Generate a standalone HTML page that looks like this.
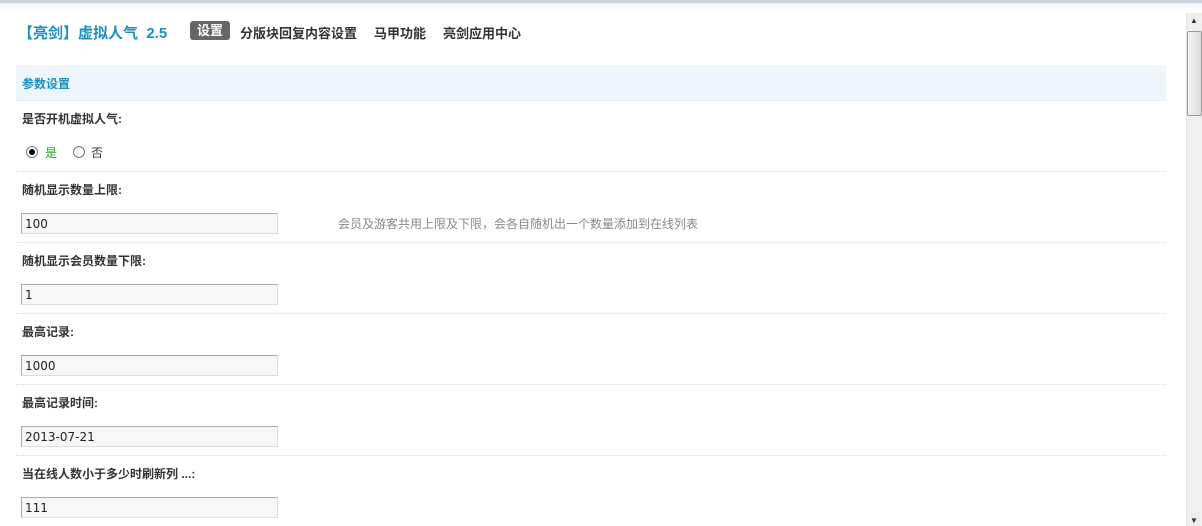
<!DOCTYPE html>
<html><head><meta charset="utf-8"><style>
*{margin:0;padding:0;box-sizing:border-box}
body{width:1202px;height:526px;overflow:hidden;background:#fff;font-family:"Liberation Sans","Noto Sans CJK SC",sans-serif;font-size:12px;color:#333;position:relative}
.top{position:absolute;left:0;top:0;width:1202px;height:13px;background:linear-gradient(#f3f8fc,#fff);border-top:3px solid #c6d6e2}
.a{position:absolute;white-space:nowrap}
.title{left:18px;top:22px;font-size:15px;font-weight:bold;color:#1a8fc0}
.tab{top:23px;font-size:13px;font-weight:bold;color:#333}
.on{left:190px;top:21px;width:40px;height:19px;background:#666;color:#fff;border-radius:3px;text-align:center;line-height:20px}
.band{left:16px;top:65px;width:1150px;height:36px;background:#eef6fc;border-bottom:1px dotted #dde8ee}
.band span{position:absolute;left:6px;top:10px;font-weight:bold;color:#1a8fc0;font-size:12px}
.lab{left:22px;font-weight:bold;font-size:12px;color:#333}
.sep{left:16px;width:1150px;height:0;border-top:1px dotted #dcdcdc}
.inp{left:21px;width:257px;height:21px;border:1px solid #aaa;border-right-color:#ddd;border-bottom-color:#ddd;background:#f7f7f7;font-size:12px;padding:3px 0 0 3px;font-family:"DejaVu Sans",sans-serif;color:#222}
.tip{left:338px;top:215px;color:#888;font-size:12px}
.sb{position:absolute;left:1186px;top:13px;width:16px;height:513px;background:#efefef;border-left:1px solid #e4e4e4}
.thumb{position:absolute;left:1187px;top:31px;width:15px;height:85px;background:linear-gradient(90deg,#f4f4f4,#dcdcdc);border:1px solid #999;border-radius:2px}
</style></head><body>
<div class="top"></div>
<div class="a title">【亮剑】虚拟人气&nbsp;&nbsp;2.5</div>
<div class="a tab on">设置</div>
<div class="a tab" style="left:240px">分版块回复内容设置</div>
<div class="a tab" style="left:374px">马甲功能</div>
<div class="a tab" style="left:443px">亮剑应用中心</div>
<div class="a band"><span>参数设置</span></div>
<div class="a lab" style="top:110px">是否开机虚拟人气:</div>
<div class="a" style="left:26px;top:146px;width:12px;height:12px;border:1px solid #777;border-radius:50%;background:#fff"><div style="width:6px;height:6px;margin:2px;background:#000;border-radius:50%"></div></div>
<div class="a" style="left:45px;top:144px;color:#2a2;font-size:12px">是</div>
<div class="a" style="left:73px;top:146px;width:12px;height:12px;border:1px solid #777;border-radius:50%;background:#fff"></div>
<div class="a" style="left:91px;top:144px;font-size:12px">否</div>

<div class="a sep" style="top:171px"></div>
<div class="a lab" style="top:181px">随机显示数量上限:</div>
<div class="a inp" style="top:213px">100</div>
<div class="a tip">会员及游客共用上限及下限，会各自随机出一个数量添加到在线列表</div>

<div class="a sep" style="top:242px"></div>
<div class="a lab" style="top:252px">随机显示会员数量下限:</div>
<div class="a inp" style="top:284px">1</div>

<div class="a sep" style="top:313px"></div>
<div class="a lab" style="top:323px">最高记录:</div>
<div class="a inp" style="top:355px">1000</div>

<div class="a sep" style="top:384px"></div>
<div class="a lab" style="top:394px">最高记录时间:</div>
<div class="a inp" style="top:426px">2013-07-21</div>

<div class="a sep" style="top:455px"></div>
<div class="a lab" style="top:465px">当在线人数小于多少时刷新列 ...:</div>
<div class="a inp" style="top:497px">111</div>

<div class="sb"></div>
<div class="thumb"></div>
<div class="a" style="left:1190px;top:16px;font-size:8px;color:#333">▲</div>
<div class="a" style="left:1190px;top:516px;font-size:8px;color:#333">▼</div>
</body></html>
